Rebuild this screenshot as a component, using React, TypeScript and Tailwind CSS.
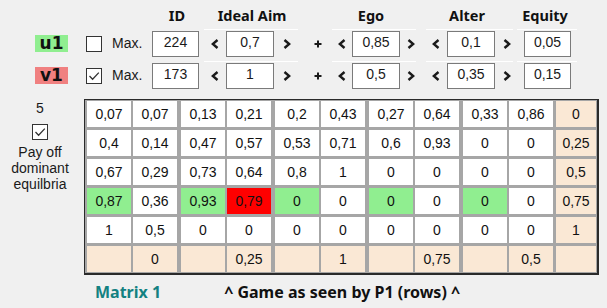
import React from "react";

const SANS = { fontFamily: '"Liberation Sans", Arial, sans-serif' };
const NOTO = { fontFamily: '"Noto Sans", "Open Sans", sans-serif' };
const DEJA = { fontFamily: '"DejaVu Sans", Verdana, sans-serif' };

const rows: string[][] = [
  ["0,07", "0,07", "0,13", "0,21", "0,2", "0,43", "0,27", "0,64", "0,33", "0,86", "0"],
  ["0,4", "0,14", "0,47", "0,57", "0,53", "0,71", "0,6", "0,93", "0", "0", "0,25"],
  ["0,67", "0,29", "0,73", "0,64", "0,8", "1", "0", "0", "0", "0", "0,5"],
  ["0,87", "0,36", "0,93", "0,79", "0", "0", "0", "0", "0", "0", "0,75"],
  ["1", "0,5", "0", "0", "0", "0", "0", "0", "0", "0", "1"],
  ["", "0", "", "0,25", "", "1", "", "0,75", "", "0,5", ""],
];

const gapCls = [
  "mr-[2px]",
  "mr-[4px]",
  "mr-[2px]",
  "mr-[4px]",
  "mr-[2px]",
  "mr-[4px]",
  "mr-[2px]",
  "mr-[4px]",
  "mr-[2px]",
  "mr-[3px]",
  "",
];

function cellBg(r: number, c: number): string {
  if (r === 5 || c === 10) return "bg-[#fae8d5]";
  if (r === 3) {
    if (c === 3) return "bg-[#ff0000]";
    if (c === 0 || c === 2 || c === 4 || c === 6 || c === 8) return "bg-[#90ee90]";
  }
  return "bg-white";
}

function Check({ checked }: { checked: boolean }) {
  return (
    <div className="w-[16px] h-[16px] border border-[#333333] bg-white flex items-center justify-center">
      {checked && (
        <svg width="14" height="14" viewBox="0 0 14 14">
          <path d="M2.5 7 L5.6 10.2 L11.8 3.6" fill="none" stroke="#333333" strokeWidth="1.3" />
        </svg>
      )}
    </div>
  );
}

function Box({ v, w }: { v: string; w: string }) {
  return (
    <div
      className={`${w} h-[26px] border border-[#7a7a7a] bg-white flex items-center justify-center pb-[3px] text-[14px] text-[#1a1a1a]`}
      style={SANS}
    >
      {v}
    </div>
  );
}

function Left() {
  return (
    <svg width="8" height="10" viewBox="0 0 8 10">
      <polyline points="6.5,1 1.8,5 6.5,9" fill="none" stroke="#1a1a1a" strokeWidth="2.4" />
    </svg>
  );
}
function Right() {
  return (
    <svg width="8" height="10" viewBox="0 0 8 10">
      <polyline points="1.5,1 6.2,5 1.5,9" fill="none" stroke="#1a1a1a" strokeWidth="2.4" />
    </svg>
  );
}
function Plus() {
  return (
    <svg width="8" height="8" viewBox="0 0 8 8">
      <path d="M4 0.5 V7.5 M0.5 4 H7.5" stroke="#1a1a1a" strokeWidth="2" />
    </svg>
  );
}

function ParamRow({
  label,
  labelBg,
  checked,
  id,
  ideal,
  ego,
  alter,
  equity,
}: {
  label: string;
  labelBg: string;
  checked: boolean;
  id: string;
  ideal: string;
  ego: string;
  alter: string;
  equity: string;
}) {
  return (
    <div className="flex h-[29px] items-stretch">
      <div className="ml-[35px] w-[33px] flex items-center">
        <div
          className={`w-[33px] h-[17px] ${labelBg} flex items-center justify-center text-[17px] font-bold text-[#111111] leading-none`}
          style={DEJA}
        >
          {label}
        </div>
      </div>
      <div className="ml-[18px] flex items-center">
        <Check checked={checked} />
      </div>
      <div className="ml-[10px] w-[40px] flex items-center text-[14px] text-[#1a1a1a]" style={SANS}>
        Max.
      </div>
      <div className="flex items-center">
        <Box v={id} w="w-[47px]" />
      </div>
      <div className="ml-[5px] w-[94px] border-t border-white pl-[7px] flex items-center">
        <Left />
        <div className="ml-[7px]">
          <Box v={ideal} w="w-[48px]" />
        </div>
        <div className="ml-[9px] flex">
          <Right />
        </div>
      </div>
      <div className="ml-[16px] w-[8px] flex items-center">
        <Plus />
      </div>
      <div className="ml-[10px] w-[84px] border-t border-white pl-[6px] flex items-center">
        <Left />
        <div className="ml-[6px]">
          <Box v={ego} w="w-[48px]" />
        </div>
        <div className="ml-[7px] flex">
          <Right />
        </div>
      </div>
      <div className="ml-[10px] w-[87px] border-t border-white pl-[6px] flex items-center">
        <Left />
        <div className="ml-[7px]">
          <Box v={alter} w="w-[48px]" />
        </div>
        <div className="ml-[8px] flex">
          <Right />
        </div>
      </div>
      <div className="ml-[4px] w-[60px] border-t border-white pl-[7px] flex items-center">
        <Box v={equity} w="w-[47px]" />
      </div>
    </div>
  );
}

export default function App() {
  return (
    <div className="w-[607px] h-[308px] bg-[#f0f0f0] overflow-hidden text-[#111111]">
      {/* Header */}
      <div
        className="flex h-[29px] pt-[5px] text-[14.5px] font-bold leading-[20px] text-[#111111]"
        style={NOTO}
      >
        <div className="ml-[147px] w-[60px] text-center">ID</div>
        <div className="w-[90px] text-center">Ideal Aim</div>
        <div className="ml-[34px] w-[80px] text-center">Ego</div>
        <div className="ml-[16px] w-[80px] text-center">Alter</div>
        <div className="w-[76px] text-center">Equity</div>
      </div>

      <ParamRow
        label="u1"
        labelBg="bg-[#90ee90]"
        checked={false}
        id="224"
        ideal="0,7"
        ego="0,85"
        alter="0,1"
        equity="0,05"
      />
      <div className="mt-[3px]">
        <ParamRow
          label="v1"
          labelBg="bg-[#f08080]"
          checked={true}
          id="173"
          ideal="1"
          ego="0,5"
          alter="0,35"
          equity="0,15"
        />
      </div>

      {/* Main */}
      <div className="flex items-start">
        <div
          className="w-[84px] pr-[4px] pt-[10px] flex flex-col items-center text-[14px] leading-[16px] text-[#1a1a1a]"
          style={SANS}
        >
          <div>5</div>
          <div className="mt-[8px]">
            <Check checked={true} />
          </div>
          <div className="mt-[4px] text-center">
            Pay off
            <br />
            dominant
            <br />
            equilbria
          </div>
        </div>

        <div className="mt-[9px] w-[515px] border-l border-t border-r-2 border-b-2 border-[#2a2a2a] bg-[#a6a6a6] pl-[2px] pr-[1px] pt-[1px] pb-[1px] flex flex-col gap-y-[3px]">
          {rows.map((row, r) => (
            <div key={r} className="flex">
              {row.map((v, c) => (
                <div
                  key={c}
                  className={`${c === 10 ? "w-[40px]" : "w-[44px]"} h-[26px] ${gapCls[c]} ${cellBg(
                    r,
                    c
                  )} flex items-center justify-center text-[14px] text-[#111111]`}
                  style={SANS}
                >
                  {v}
                </div>
              ))}
            </div>
          ))}
        </div>
      </div>

      {/* Footer */}
      <div className="flex mt-[6px] h-[22px] text-[16px] font-bold leading-[22px]" style={NOTO}>
        <div className="ml-[95px] text-[#138181]">Matrix 1</div>
        <div className="ml-[63px] text-[#111111]">^ Game as seen by P1 (rows) ^</div>
      </div>
    </div>
  );
}
